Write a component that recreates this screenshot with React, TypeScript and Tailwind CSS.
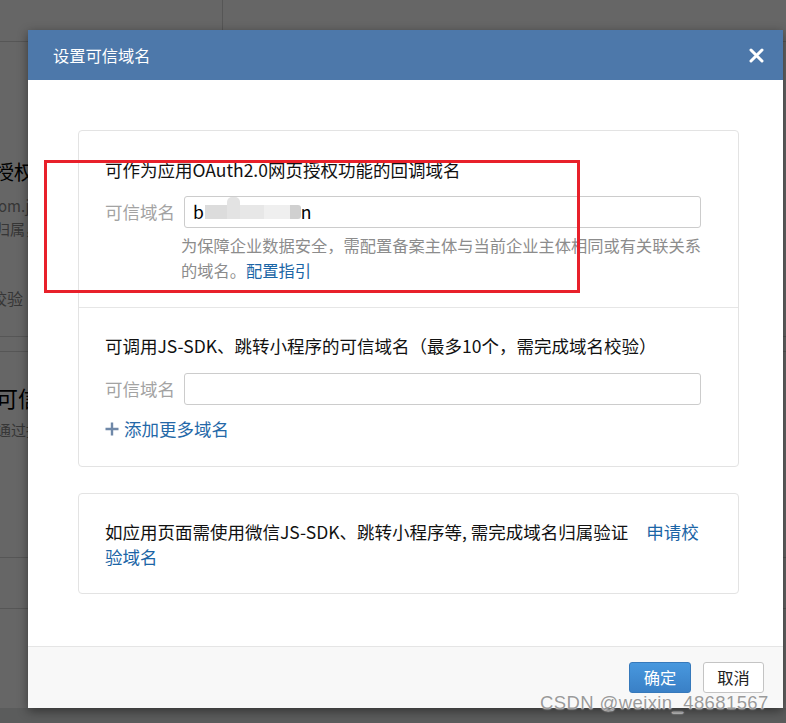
import React from 'react';

const fontStack = "font-['Noto_Sans_CJK_SC','Noto_Sans',sans-serif]";

const CloseIcon = () => (
   <svg width="15" height="15" viewBox="0 0 15 15" fill="none">
      <path
         d="M2 2L13 13M13 2L2 13"
         stroke="#ffffff"
         strokeWidth="3"
         strokeLinecap="round"
      />
   </svg>
);

const PlusIcon = () => (
   <svg width="14" height="14" viewBox="0 0 14 14" fill="none">
      <path d="M7 0.5V13.5M0.5 7H13.5" stroke="#6f88a8" strokeWidth="2.4" />
   </svg>
);

// page behind the dialog, only its left edge shows
const BackgroundPage = () => (
   <div className="flex flex-col h-full bg-white text-[#888] whitespace-nowrap">
      <div className="h-[42px] border-b border-[#d6d6d6] flex">
         <div className="w-[223px] h-full border-r border-[#d6d6d6]"></div>
      </div>
      <div className="pt-[115px] -ml-[6px] text-[20px] leading-[30px] text-black">授权</div>
      <div className="mt-[7px] -ml-[2px] text-[15px] leading-[23px]">om.jiu</div>
      <div className="-ml-[5px] text-[15px] leading-[23px]">归属，</div>
      <div className="mt-[46px] -ml-[9px] text-[16px] leading-[24px]">校验</div>
      <div className="mt-[26px] h-px bg-[#d6d6d6]"></div>
      <div className="mt-[14px] h-px bg-[#d6d6d6]"></div>
      <div className="mt-[30px] -ml-[4px] text-[22px] leading-[30px] text-black">可信</div>
      <div className="mt-[7px] -ml-[4px] text-[15px] leading-[22px]">通过接</div>
      <div className="mt-[116px] h-px bg-[#d6d6d6]"></div>
      <div className="mt-[50px] h-px bg-[#d6d6d6]"></div>
      <div className="flex-1 mt-[99px] bg-[#e4e6e5]"></div>
   </div>
);

const DomainRow = ({ children }: { children?: React.ReactNode }) => (
   <div className="flex items-center">
      <span className="w-[79px] text-[17.5px] text-[#a3a3a3] leading-[26px]">
         可信域名
      </span>
      <div className="flex-1 h-[32px] border border-[#cccccc] rounded-[3px] bg-white flex items-center px-[8px] text-[17.5px] text-black">
         {children}
      </div>
   </div>
);

export default function App() {
   return (
      <div
         className={`relative w-[786px] h-[723px] overflow-hidden ${fontStack}`}
      >
         <BackgroundPage />
         <div className="absolute inset-0 bg-black/60"></div>

         {/* dialog */}
         <div className="absolute left-[28px] top-[30px] w-[755px] h-[678px] bg-white flex flex-col shadow-[0_3px_10px_rgba(0,0,0,0.45)]">
            <div className="h-[50px] bg-[#4d78aa] flex items-center justify-between pl-[25px] pr-[19px]">
               <span className="text-[16.25px] text-white">设置可信域名</span>
               <CloseIcon />
            </div>

            <div className="flex-1 pt-[50px] pl-[50px] pr-[44px]">
               <div className="border border-[#e3e3e3] rounded-[4px]">
                  <div className="pt-[26px] pb-[24px] pl-[26px] pr-[37px]">
                     <div className="text-[17.5px] leading-[26px] text-[#111]">
                        可作为应用OAuth2.0网页授权功能的回调域名
                     </div>
                     <div className="mt-[13px]">
                        <DomainRow>
                           <span>b</span>
                           <div className="flex items-center ml-[1px]">
                              <div className="w-[22px] h-[14px] bg-[#dcdcdc]"></div>
                              <div className="w-[13px] h-[22px] -mt-[8px] rounded-t-[5px] bg-[#e3e3e3]"></div>
                              <div className="w-[24px] h-[14px] bg-[#e7e7e7]"></div>
                              <div className="w-[26px] h-[14px] bg-[#efefef]"></div>
                              <div className="w-[11px] h-[14px] rounded-r-[3px] bg-[#d0d0d0]"></div>
                           </div>
                           <span>n</span>
                        </DomainRow>
                     </div>
                     <div className="mt-[5px] ml-[76px] text-[16.25px] leading-[25px] text-[#8c8c8c] whitespace-nowrap">
                        为保障企业数据安全，需配置备案主体与当前企业主体相同或有关联关系
                        <br />
                        的域名。<span className="text-[#1b65a6]">配置指引</span>
                     </div>
                  </div>

                  <div className="border-t border-[#e6e6e6] pt-[25px] pb-[24px] pl-[26px] pr-[37px]">
                     <div className="text-[17.5px] leading-[26px] text-[#111] whitespace-nowrap">
                        可调用JS-SDK、跳转小程序的可信域名（最多10个，需完成域名校验）
                     </div>
                     <div className="mt-[14px]">
                        <DomainRow />
                     </div>
                     <div className="mt-[11px] flex items-center gap-[5px] text-[17.5px] leading-[26px] text-[#2468a8]">
                        <PlusIcon />
                        <span>添加更多域名</span>
                     </div>
                  </div>
               </div>

               <div className="mt-[26px] h-[101px] border border-[#e3e3e3] rounded-[4px] pt-[25px] pl-[26px] pr-[26px]">
                  <div className="text-[17.5px] leading-[25px] text-[#111] whitespace-nowrap">
                     如应用页面需使用微信JS-SDK、跳转小程序等, 需完成域名归属验证
                     <span className="ml-[18px] text-[#1b65a6]">
                        申请校
                        <br />
                        验域名
                     </span>
                  </div>
               </div>
            </div>

            <div className="h-[62px] border-t border-[#e5e5e5] bg-[#f8f8f8] flex items-center justify-end gap-[12px] pr-[19px]">
               <button className="w-[62px] h-[31px] rounded-[3px] border border-[#3679bb] bg-gradient-to-b from-[#4898de] to-[#3a80c6] text-white text-[16.25px]">
                  确定
               </button>
               <button className="w-[61px] h-[31px] rounded-[3px] border border-[#c4c4c4] bg-white text-[#222] text-[16.25px]">
                  取消
               </button>
            </div>
         </div>

         {/* annotation drawn over the screenshot */}
         <div className="absolute left-[44px] top-[160px] w-[536px] h-[133px] border-[3px] border-[#e8202a]"></div>

         <div className="absolute left-[540px] top-[693px] text-[18.5px] leading-[20px] tracking-[0.4px] text-[#9a9a9a] font-['Liberation_Sans',sans-serif] [text-shadow:0_0_2px_#ffffff,0_0_1px_#ffffff]">
            CSDN @weixin_48681567
         </div>
      </div>
   );
}
